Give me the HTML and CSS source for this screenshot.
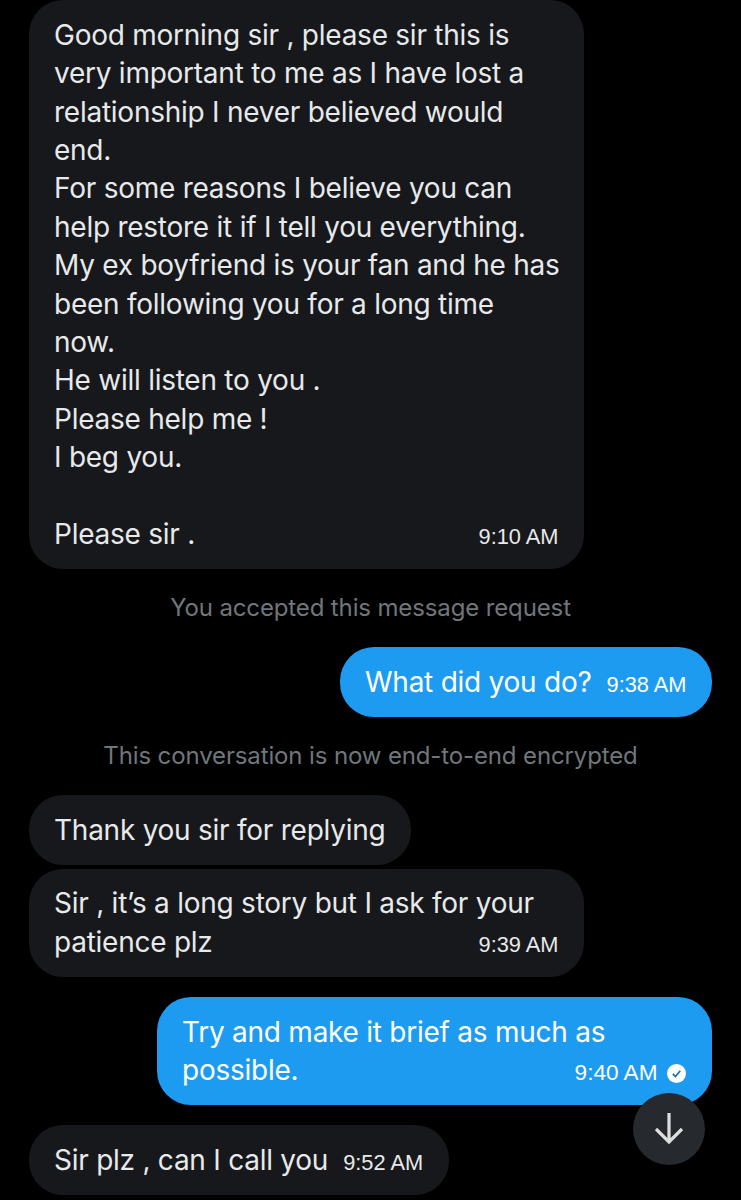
FILE: index.html
```html
<!DOCTYPE html>
<html lang="en">
  <head>
    <meta charset="UTF-8" />
    <meta name="viewport" content="width=device-width, initial-scale=1.0" />
    <title>Messages</title>
    <link rel="stylesheet" href="styles.css">
  </head>
  <body>
    <main class="chat">
      <div class="bubble in wide">
        <p>Good morning sir , please sir this is</p>
        <p>very important to me as I have lost a</p>
        <p>relationship I never believed would</p>
        <p>end.</p>
        <p>For some reasons I believe you can</p>
        <p>help restore it if I tell you everything.</p>
        <p>My ex boyfriend is your fan and he has</p>
        <p>been following you for a long time</p>
        <p>now.</p>
        <p>He will listen to you .</p>
        <p>Please help me !</p>
        <p>I beg you.</p>
        <p>&nbsp;</p>
        <div class="last">
          <p>Please sir .</p>
          <span class="time">9:10 AM</span>
        </div>
      </div>

      <p class="notice">You accepted this message request</p>

      <div class="bubble out">
        <div class="last">
          <p>What did you do?</p>
          <span class="time">9:38 AM</span>
        </div>
      </div>

      <p class="notice">This conversation is now end-to-end encrypted</p>

      <div class="bubble in">
        <p>Thank you sir for replying</p>
      </div>

      <div class="bubble in wide near">
        <p>Sir , it’s a long story but I ask for your</p>
        <div class="last">
          <p>patience plz</p>
          <span class="time">9:39 AM</span>
        </div>
      </div>

      <div class="bubble out wide apart">
        <p>Try and make it brief as much as</p>
        <div class="last">
          <p>possible.</p>
          <span class="time seen-time">9:40 AM
            <svg class="seen" viewBox="0 0 19 19" width="19" height="19">
              <circle cx="9.5" cy="9.5" r="9.5" fill="#fff" />
              <path d="M5.8 9.900l2.600 2.600 4.900-5.700" fill="none" stroke="#1d6fa8" stroke-width="1.700" />
            </svg>
          </span>
        </div>
      </div>

      <div class="bubble in apart">
        <div class="last">
          <p>Sir plz , can I call you</p>
          <span class="time">9:52 AM</span>
        </div>
      </div>

      <button class="scroll-down" aria-label="Scroll to bottom">
        <svg viewBox="0 0 32 32" width="32" height="32">
          <path d="M16 0v30M3 16l13 13 13-13" fill="none" stroke="#dcdedf" stroke-width="3.200" />
        </svg>
      </button>
    </main>
  </body>
</html>
```

FILE: styles.css
```css
* {
  box-sizing: border-box;
}

html,
body {
  margin: 0;
  background-color: #000;
}

body {
  height: 1200px;
  overflow: hidden;
  font-family: Inter, "Liberation Sans", sans-serif;
  color: #e7e9ea;
}

p {
  margin: 0;
}

.chat {
  position: relative;
  display: flex;
  flex-direction: column;
  height: 1200px;
  padding: 0 29px;
}

.bubble {
  padding: 15.7px 25.5px 15.7px 25px;
  border-radius: 34px;
  font-size: 28px;
  line-height: 38.4px;
  letter-spacing: -0.25px;
  white-space: nowrap;
}

.in {
  align-self: flex-start;
  background-color: #17181b;
}

.out {
  align-self: flex-end;
  background-color: #1d9bf0;
  color: #fff;
}

.wide {
  width: 555px;
}

.near {
  margin-top: 4px;
}

.apart {
  margin-top: 20px;
}

.last {
  display: flex;
  justify-content: space-between;
  align-items: baseline;
  gap: 15px;
}

.time {
  display: flex;
  align-items: center;
  gap: 9px;
  font-family: "Liberation Sans", sans-serif;
  font-size: 21.8px;
  line-height: 1;
  letter-spacing: 0;
}

.seen-time {
  font-size: 22.6px;
}

.seen {
  margin-right: 1px;
}

.notice {
  margin: 20px 0;
  font-size: 24px;
  line-height: 38px;
  letter-spacing: -0.13px;
  text-align: center;
  color: #71767b;
}

.scroll-down {
  position: absolute;
  left: 633px;
  top: 1093px;
  display: flex;
  align-items: center;
  justify-content: center;
  width: 72px;
  height: 72px;
  padding: 0;
  border: none;
  border-radius: 50%;
  background-color: #26292d;
}
```
